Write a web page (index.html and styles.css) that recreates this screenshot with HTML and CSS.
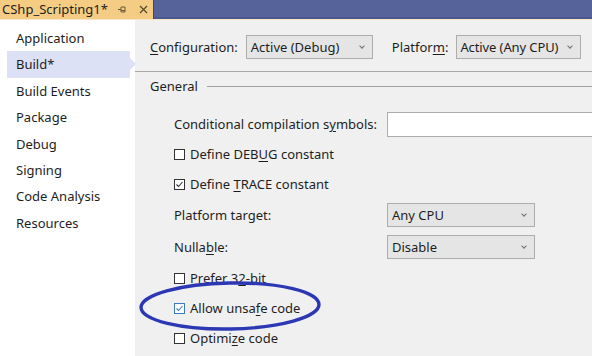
FILE: index.html
```
<!DOCTYPE html>
<html lang="en">

<head>
    <meta charset="utf-8">
    <title>CShp_Scripting1 - Build</title>
    <link rel="stylesheet" href="styles.css">
</head>

<body>
    <div class="page">
        <header class="tabbar">
            <div class="tab">
                <span class="tab-title">CShp_Scripting1*</span>
                <svg class="pin" width="9" height="9" viewBox="0 0 9 9">
                    <path d="M0 4.5h3M3 2v5M3 2h4v5H3M3 5.5h4" fill="none" stroke="#6b5a3a" stroke-width="1"/>
                </svg>
                <svg class="close" width="9" height="9" viewBox="0 0 9 9">
                    <path d="M1 1l7 7M8 1l-7 7" stroke="#5a4a30" stroke-width="1.3"/>
                </svg>
            </div>
            <div class="tab-rest"></div>
        </header>

        <div class="workspace">
            <nav class="sidebar">
                <div class="nav-item">Application</div>
                <div class="nav-item valgt">Build*</div>
                <div class="nav-item">Build Events</div>
                <div class="nav-item">Package</div>
                <div class="nav-item">Debug</div>
                <div class="nav-item">Signing</div>
                <div class="nav-item">Code Analysis</div>
                <div class="nav-item">Resources</div>
            </nav>

            <main class="content">
                <div class="config-row">
                    <span class="label"><u>C</u>onfiguration:</span>
                    <div class="dropdown config">Active (Debug)<span class="chevron"></span></div>
                    <span class="label platform">Platfor<u>m</u>:</span>
                    <div class="dropdown platform-box">Active (Any CPU)<span class="chevron"></span></div>
                </div>

                <div class="section-title">
                    <span>General</span>
                    <span class="rule"></span>
                </div>

                <div class="form">
                    <div class="row field first">
                        <span class="label">Conditional compilation s<u>y</u>mbols:</span>
                        <div class="textbox"></div>
                    </div>
                    <div class="row check"><span class="box"></span><span>Define DEB<u>U</u>G constant</span></div>
                    <div class="row check"><span class="box checked"></span><span>Define <u>T</u>RACE constant</span></div>
                    <div class="row field">
                        <span class="label">Platform target:</span>
                        <div class="dropdown wide">Any CPU<span class="chevron"></span></div>
                    </div>
                    <div class="row field">
                        <span class="label">Nulla<u>b</u>le:</span>
                        <div class="dropdown wide">Disable<span class="chevron"></span></div>
                    </div>
                    <div class="row check"><span class="box"></span><span>Prefer 3<u>2</u>-bit</span></div>
                    <div class="row check"><span class="box checked hover"></span><span>Allow unsa<u>f</u>e code</span></div>
                    <div class="row check"><span class="box"></span><span>Optimi<u>z</u>e code</span></div>
                </div>
            </main>
        </div>

        <svg class="marker" width="190" height="54" viewBox="0 0 190 54">
            <ellipse cx="93" cy="26" rx="89" ry="23" fill="none" stroke="#2c37b4" stroke-width="3.4" transform="rotate(-1 93 26)"/>
        </svg>
    </div>
</body></html>
```

FILE: styles.css
```
* {
    box-sizing: border-box;
}

body {
    margin: 0;
    background-color: #f0f0f0;
    font-family: 'Noto Sans', 'Open Sans', sans-serif;
    font-size: 13px;
    color: #1e1e1e;
}

u {
    text-underline-offset: 2px;
}

.page {
    position: relative;
    width: 592px;
    height: 356px;
    overflow: hidden;
}

.tabbar {
    display: flex;
    height: 19px;
    background-color: #56639b;
}

.tab {
    display: flex;
    align-items: center;
    width: 154px;
    padding-left: 2px;
    background-color: #f5cc84;
    border-right: 1px solid #3d4870;
}

.tab-title {
    line-height: 19px;
}

.pin {
    margin-left: 10px;
}

.close {
    margin-left: 12px;
}

.tab-rest {
    flex: 1;
    border-bottom: 2px solid #4a5790;
}

.workspace {
    display: flex;
    height: 337px;
    border-top: 1px solid #f8e6c2;
}

.sidebar {
    width: 135px;
    padding-top: 5px;
    background-color: #fff;
}

.nav-item {
    position: relative;
    height: 26.4px;
    line-height: 26px;
    margin-left: 7px;
    width: 123px;
    padding-left: 9px;
}

.nav-item.valgt {
    background-color: #dde1f6;
}

.nav-item.valgt::after {
    content: "";
    position: absolute;
    right: -6px;
    top: 7px;
    border-left: 6px solid #dde1f6;
    border-top: 6px solid transparent;
    border-bottom: 6px solid transparent;
}

.content {
    flex: 1;
    padding-top: 15px;
}

.config-row {
    display: flex;
    align-items: center;
    padding: 0 0 12px 15px;
    border-bottom: 1px solid #a8a8a8;
}

.dropdown {
    position: relative;
    height: 24px;
    line-height: 22px;
    padding-left: 4px;
    background-color: #e5e5e5;
    border: 1px solid #adadad;
    white-space: nowrap;
}

.dropdown.config {
    width: 127px;
    margin-left: 8px;
}

.label.platform {
    margin-left: 19px;
}

.dropdown.platform-box {
    width: 125px;
    margin-left: 8px;
    padding-left: 3px;
    letter-spacing: -0.1px;
}

.dropdown.wide {
    width: 148px;
}

.chevron {
    position: absolute;
    right: 8px;
    top: 8px;
    width: 4px;
    height: 4px;
    border-right: 1px solid #707070;
    border-bottom: 1px solid #707070;
    transform: rotate(45deg);
}

.section-title {
    display: flex;
    align-items: center;
    gap: 9px;
    padding: 2px 0 0 15px;
    height: 26px;
}

.rule {
    flex: 1;
    height: 1px;
    background-color: #a0a0a0;
}

.form {
    padding: 11px 0 0 39px;
}

.row {
    display: flex;
    align-items: center;
}

.field {
    height: 32px;
}

.field.first {
    height: 30px;
}

.field .label {
    width: 213px;
    flex-shrink: 0;
}

.textbox {
    flex: 1;
    height: 25px;
    background-color: #fff;
    border: 1px solid #adadad;
    border-right: 0;
}

.check {
    height: 30px;
}

.box {
    width: 11px;
    height: 11px;
    margin-right: 5px;
    border: 1px solid #333;
    background-color: #fff;
}

.box.checked {
    background: #fff url("data:image/svg+xml,%3Csvg xmlns='http://www.w3.org/2000/svg' width='9' height='9'%3E%3Cpath d='M1.5 4.5l2 2 4-4.5' fill='none' stroke='%23333' stroke-width='1.1'/%3E%3C/svg%3E") no-repeat center;
}

.box.hover {
    border-color: #3a7cc0;
    background-image: url("data:image/svg+xml,%3Csvg xmlns='http://www.w3.org/2000/svg' width='9' height='9'%3E%3Cpath d='M1.5 4.5l2 2 4-4.5' fill='none' stroke='%233a7cc0' stroke-width='1.1'/%3E%3C/svg%3E");
}

.marker {
    position: absolute;
    left: 137px;
    top: 280px;
}
```
